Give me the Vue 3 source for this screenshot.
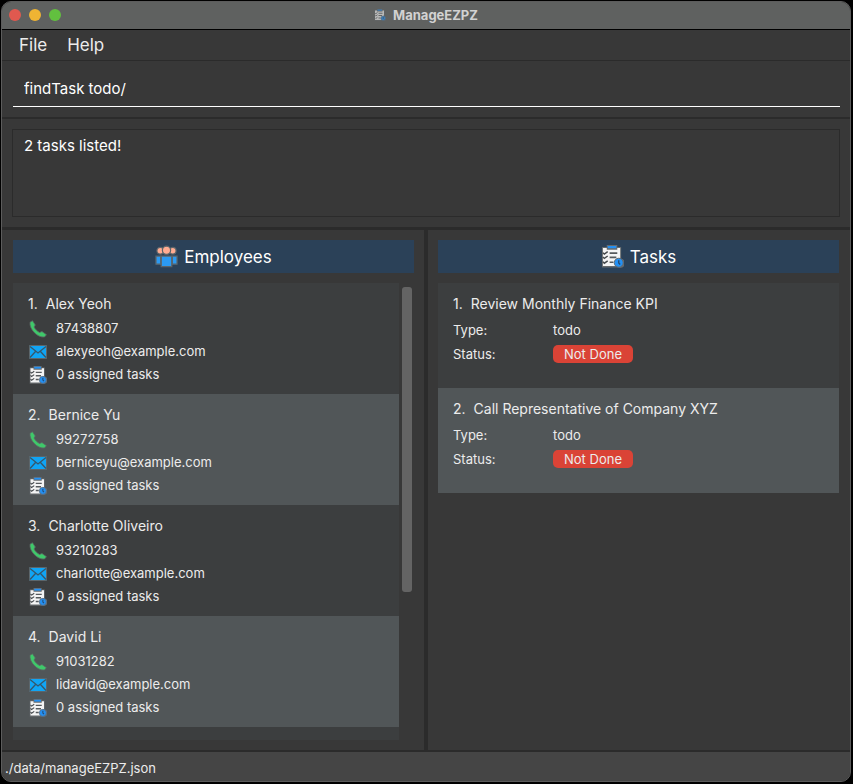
<script setup>
import { ref } from 'vue'

const command = ref('findTask todo/')
const menus = ['File', 'Help']
const employees = [
  { name: 'Alex Yeoh', phone: '87438807', email: 'alexyeoh@example.com', tasks: 0 },
  { name: 'Bernice Yu', phone: '99272758', email: 'berniceyu@example.com', tasks: 0 },
  { name: 'Charlotte Oliveiro', phone: '93210283', email: 'charlotte@example.com', tasks: 0 },
  { name: 'David Li', phone: '91031282', email: 'lidavid@example.com', tasks: 0 },
]
const tasks = [
  { title: 'Review Monthly Finance KPI', type: 'todo', status: 'Not Done' },
  { title: 'Call Representative of Company XYZ', type: 'todo', status: 'Not Done' },
]
</script>

<template>
  <svg class="symbols" aria-hidden="true">
    <symbol id="icon-tasks" viewBox="0 0 24 24">
      <path d="M1 2h5V0h11v2h4v12a5 5 0 1 1-3 9.500H1z" fill="#666a6c" />
      <path d="M2 3h4v2h11V3h3v10.500l-4 3V22H2z" fill="#f4f4f4" />
      <path d="M7 1h9v2.500H7z" fill="#2490f3" />
      <path d="M9 8.500h8M9 13h7M9 18h4" stroke="#565a5d" stroke-width="1.800" />
      <path d="M2 8l1.500 1.500L7 7M2 12.500L3.500 14l3.500-2.500M2 17.500L3.500 19l3.500-2.500" fill="none" stroke="#45494c" stroke-width="1.500" />
      <circle cx="18.500" cy="18.500" r="4.700" fill="#2490f3" stroke="#5d6770" />
      <path d="M18.500 15.800v3l1.500 1.500" fill="none" stroke="#254a70" stroke-width="1.400" />
    </symbol>
    <symbol id="icon-people" viewBox="0 0 24 24">
      <g stroke="#5b656b" stroke-width="1.300">
        <circle cx="5.500" cy="6" r="3.500" fill="#ffab91" />
        <circle cx="18.500" cy="6" r="3.500" fill="#ffab91" />
        <path d="M1 11.500h5v8.500H1zM18 11.500h5v8.500h-5z" fill="#2b9af3" />
        <path d="M6.500 11.500h11V22.500h-11z" fill="#2b9af3" />
        <circle cx="12" cy="5.500" r="4.300" fill="#ffab91" />
      </g>
    </symbol>
    <symbol id="icon-phone" viewBox="0 0 18 18">
      <path d="M1 2.200 3.500.700 6.300 5 5 7c1.200 2.300 3 4 5.500 5.500L13 11.500l4.500 3.200-2 2.300C8.500 18 0 9 1 2.200z" fill="#3fc86a" stroke="#5c6663" stroke-width=".8" />
    </symbol>
    <symbol id="icon-mail" viewBox="0 0 18 14">
      <path d="M.5.500h17v13H.5z" fill="#10a5f5" stroke="#5c666b" />
      <path d="M1 1.500 9 8l8-6.500M1 12.500l5.500-6M17 12.500l-5.500-6" fill="none" stroke="#36576b" stroke-width="1.300" />
    </symbol>
  </svg>

  <div class="window">
    <header class="titlebar">
      <div class="lights">
        <button class="light close" type="button" aria-label="Close"></button>
        <button class="light minimise" type="button" aria-label="Minimise"></button>
        <button class="light zoom" type="button" aria-label="Zoom"></button>
      </div>
      <h1 class="title">
        <svg class="title-icon" aria-hidden="true"><use href="#icon-tasks" /></svg>
        ManageEZPZ
      </h1>
    </header>

    <nav class="menubar">
      <button v-for="menu in menus" :key="menu" class="menu" type="button">{{ menu }}</button>
    </nav>

    <section class="command-pane">
      <input v-model="command" class="command" type="text" aria-label="Command" spellcheck="false" />
    </section>

    <section class="result-pane">
      <output class="result">2 tasks listed!</output>
    </section>

    <main class="split">
      <section class="panel">
        <h2 class="panel-title">
          <svg class="panel-icon" aria-hidden="true"><use href="#icon-people" /></svg>
          Employees
        </h2>
        <div class="scroller">
          <ol class="list filled">
            <li v-for="(person, i) in employees" :key="person.name" class="cell">
              <h3 class="name"><span>{{ i + 1 }}.</span>{{ person.name }}</h3>
              <p class="detail">
                <svg class="icon" aria-hidden="true"><use href="#icon-phone" /></svg>{{ person.phone }}
              </p>
              <p class="detail">
                <svg class="icon mail" aria-hidden="true"><use href="#icon-mail" /></svg>{{ person.email }}
              </p>
              <p class="detail">
                <svg class="icon" aria-hidden="true"><use href="#icon-tasks" /></svg>{{ person.tasks }} assigned tasks
              </p>
            </li>
          </ol>
          <div class="track"><div class="thumb"></div></div>
        </div>
      </section>

      <section class="panel tasks">
        <h2 class="panel-title">
          <svg class="panel-icon" aria-hidden="true"><use href="#icon-tasks" /></svg>
          Tasks
        </h2>
        <ol class="list">
          <li v-for="(task, i) in tasks" :key="task.title" class="cell task">
            <h3 class="name"><span>{{ i + 1 }}.</span>{{ task.title }}</h3>
            <dl class="fields">
              <dt>Type:</dt>
              <dd>{{ task.type }}</dd>
              <dt>Status:</dt>
              <dd><span class="badge">{{ task.status }}</span></dd>
            </dl>
          </li>
        </ol>
      </section>
    </main>

    <footer class="statusbar">./data/manageEZPZ.json</footer>
  </div>
</template>

<style>
body {
  background: #000;
}

#app {
  box-sizing: border-box;
  min-height: 100vh;
  padding: 1px 2px 2px 1px;
  display: flex;
}
</style>

<style scoped>
* {
  box-sizing: border-box;
}

h1, h2, h3, p, ol, dl, dd {
  margin: 0;
  padding: 0;
  font-weight: 400;
}

button, input {
  font: inherit;
  color: inherit;
  background: none;
  border: 0;
  padding: 0;
}

.symbols {
  position: absolute;
  width: 0;
  height: 0;
}

.window {
  flex: 1;
  min-width: 0;
  display: flex;
  flex-direction: column;
  overflow: hidden;
  border: 1px solid #5c5c5c;
  border-radius: 10px;
  background: #383838;
  color: #ececec;
  font-family: Inter, "Liberation Sans", sans-serif;
  font-size: 13px;
}

.titlebar {
  display: grid;
  grid-template-columns: 1fr auto 1fr;
  align-items: center;
  height: 28px;
  padding: 0 7px 1px;
  background: #5f6160;
  border-bottom: 1px solid #000;
}

.lights {
  display: flex;
  gap: 8px;
}

.light {
  width: 12px;
  height: 12px;
  border-radius: 50%;
}

.close { background: #e0594f; }
.minimise { background: #efb433; }
.zoom { background: #62c03f; }

.title {
  display: flex;
  align-items: center;
  gap: 7px;
  font-size: 13px;
  line-height: 16px;
  font-weight: 700;
  color: #d2d2d2;
}

.title-icon {
  width: 12px;
  height: 12px;
  opacity: 0.6;
}

.menubar {
  display: flex;
  gap: 20px;
  height: 31px;
  padding: 0 17px 1px;
  border-bottom: 1px solid #2b2b2b;
  font-size: 17px;
}

.command-pane {
  padding: 10px 10px 10px 11px;
  border-bottom: 2px solid #2b2b2b;
}

.command {
  display: block;
  width: 100%;
  height: 36px;
  padding: 0 11px;
  border-bottom: 1px solid #fff;
  outline: 0;
  font-size: 15px;
  color: #fff;
}

.result-pane {
  padding: 10px;
  border-bottom: 3px solid #2b2b2b;
}

.result {
  display: block;
  height: 88px;
  padding: 5px 11px;
  border: 1px solid #2b2b2b;
  font-size: 15px;
  line-height: 22px;
  color: #fff;
}

.split {
  flex: 1;
  display: grid;
  grid-template-columns: 1fr 1fr;
  gap: 4px;
  background: linear-gradient(#2b2b2b, #2b2b2b) center / 4px 100% no-repeat;
}

.panel {
  min-width: 0;
  display: flex;
  flex-direction: column;
  gap: 10px;
  padding: 10px 10px 10px 11px;
}

.tasks {
  padding: 10px 11px 10px 10px;
}

.panel-title {
  display: flex;
  align-items: center;
  justify-content: center;
  gap: 6px;
  height: 33px;
  background: #2b4158;
  font-size: 17px;
  color: #fff;
}

.panel-icon {
  width: 23px;
  height: 23px;
}

.scroller {
  flex: 1;
  display: flex;
  gap: 3px;
}

.list {
  flex: 1;
  min-width: 0;
  list-style: none;
}

.filled {
  background: #3c3e3f;
}

.track {
  width: 12px;
  padding: 4px 2px 4px 0;
}

.thumb {
  height: 68%;
  border-radius: 3px;
  background: #646464;
}

.cell {
  padding: 8px 15px;
  background: #3c3e3f;
}

.cell:nth-child(even) {
  background: #515658;
}

.task {
  padding-bottom: 22px;
}

.name {
  display: flex;
  gap: 8px;
  padding-top: 1px;
  margin-bottom: 1px;
  font-size: 14px;
  line-height: 24px;
}

.detail {
  display: flex;
  align-items: center;
  gap: 9px;
  padding-left: 1px;
  line-height: 23px;
}

.icon {
  width: 18px;
  height: 18px;
}

.mail {
  height: 14px;
}

.fields {
  display: grid;
  grid-template-columns: 100px 1fr;
  padding-top: 1px;
  line-height: 24px;
}

.badge {
  display: inline-block;
  min-width: 80px;
  padding: 0 11px;
  border-radius: 5px;
  background: #da4336;
  line-height: 18px;
  text-align: center;
}

.statusbar {
  padding: 5px 3px 0;
  height: 31px;
  border-top: 2px solid #2b2b2b;
  background: #454545;
  line-height: 22px;
}
</style>
